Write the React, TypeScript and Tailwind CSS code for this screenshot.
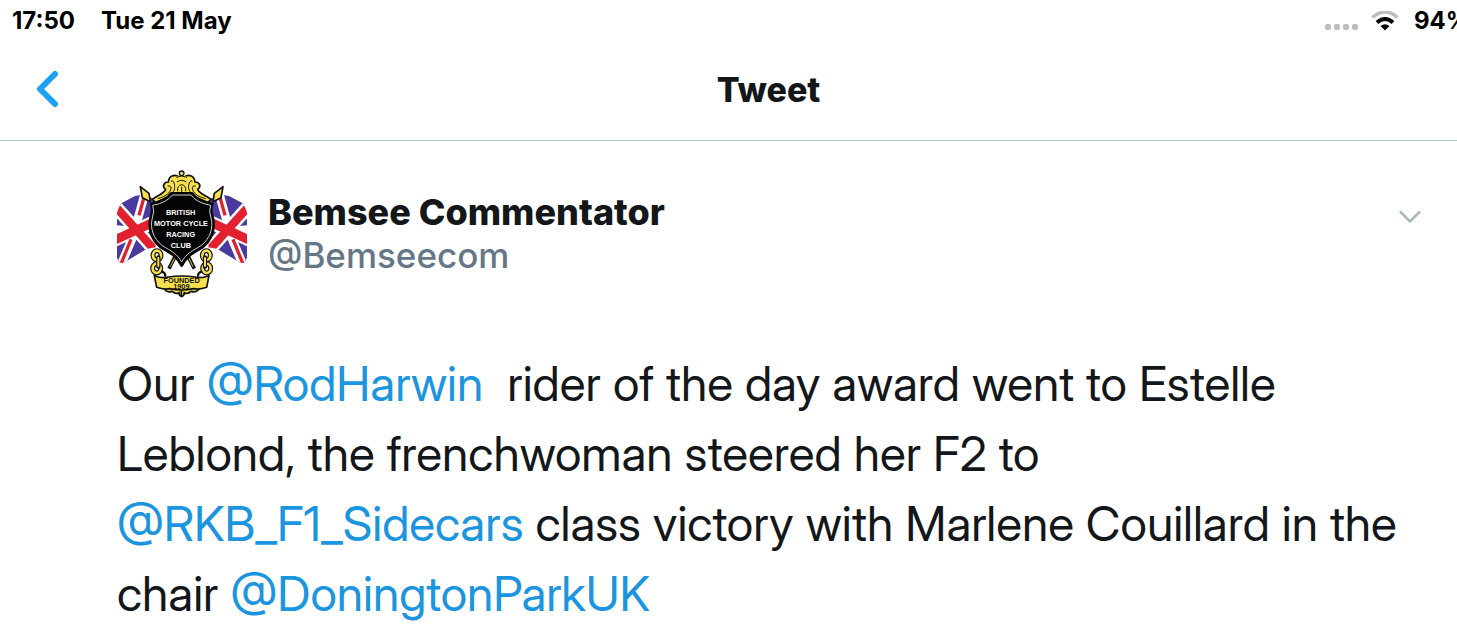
function Avatar() {
  return (
    <svg viewBox="36 30 390 390" className="size-[130px] shrink-0" role="img" aria-label="Bemsee Commentator">
      <defs>
        <clipPath id="round">
          <circle cx="231" cy="225" r="206" />
        </clipPath>
        <clipPath id="edge">
          <rect x="36" y="30" width="390" height="390" />
        </clipPath>
        <clipPath id="flagShape">
          <path d="M90 108 L112 104 L152 118 L152 262 L126 266 L54 310 L10 300 L10 150 Z" />
        </clipPath>
        <g id="flag" clipPath="url(#flagShape)">
          <rect x="0" y="80" width="170" height="240" fill="#4a3aa0" />
          <path d="M122 92 L92 200 M88 220 L44 324" stroke="#fff" strokeWidth="26" />
          <path d="M20 204 L92 212 M92 214 L146 282" stroke="#fff" strokeWidth="20" />
          <path d="M30 138 L156 278" stroke="#fff" strokeWidth="40" />
          <path d="M16 246 L156 182" stroke="#fff" strokeWidth="40" />
          <path d="M121 98 L102 166 M78 238 L48 312" stroke="#e2202f" strokeWidth="10" />
          <path d="M30 138 L156 278" stroke="#e2202f" strokeWidth="25" />
          <path d="M16 246 L156 182" stroke="#e2202f" strokeWidth="27" />
        </g>
        <g id="side">
          <path d="M106 80 L132 100 L136 125 L112 113 Z" fill="#f6e04b" stroke="#111" strokeWidth="5" strokeLinejoin="round" />
          <path d="M142 118 C162 104 176 102 182 88 C170 80 176 66 190 66 C192 46 208 44 218 48 L230 104 C202 100 182 116 152 128 Z" fill="#f6e04b" stroke="#111" strokeWidth="5" />
          <path d="M158 116 C180 110 198 100 198 82 Q196 76 188 78 M190 106 C208 98 214 84 206 66 Q202 60 198 64" fill="none" stroke="#111" strokeWidth="3" />
          <path d="M213 284 L192 326" stroke="#111" strokeWidth="11" />
          <path d="M211 289 L196 320" stroke="#d9be3d" strokeWidth="3" />
          <g fill="none">
            <ellipse cx="156" cy="286" rx="12" ry="14" stroke="#111" strokeWidth="15" />
            <ellipse cx="156" cy="286" rx="12" ry="14" stroke="#f6e04b" strokeWidth="8" />
            <ellipse cx="155" cy="325" rx="12" ry="14" stroke="#111" strokeWidth="15" />
            <ellipse cx="155" cy="325" rx="12" ry="14" stroke="#f6e04b" strokeWidth="8" />
            <path d="M160 292 L160 320" stroke="#111" strokeWidth="13" strokeLinecap="round" />
            <path d="M160 294 L160 318" stroke="#f6e04b" strokeWidth="6" strokeLinecap="round" />
            <path d="M168 334 Q184 338 180 350" stroke="#111" strokeWidth="7" />
          </g>
          <path d="M176 382 Q182 400 202 394 Q212 404 222 398 Q222 408 231 409 L231 376 Z" fill="#f6e04b" stroke="#111" strokeWidth="5" />
        </g>
      </defs>
      <g clipPath="url(#edge)">
        <g clipPath="url(#round)">
          <use href="#flag" />
          <use href="#flag" transform="translate(462 0) scale(-1 1)" />
        </g>
        <use href="#side" />
        <use href="#side" transform="translate(460 0) scale(-1 1)" />
        <path d="M213 102 Q208 70 214 50 L230 42 L246 50 Q252 70 247 102 Z" fill="#f6e04b" />
        <circle cx="230" cy="40" r="7" fill="#f6e04b" stroke="#111" strokeWidth="4" />
        <path d="M214 52 Q230 44 246 52 M216 66 Q230 56 244 66 M218 94 Q216 76 230 74 Q244 76 242 94 M230 80 V98" fill="none" stroke="#111" strokeWidth="3" />
        <path d="M138 132 Q185 122 199 100 H261 Q275 122 322 132 Q314 150 323 172 C331 206 321 240 292 262 C264 278 244 288 230 317 C216 288 196 278 168 262 C139 240 129 206 137 172 Q146 150 138 132 Z" fill="#050505" stroke="#050505" strokeWidth="8" strokeLinejoin="round" />
        <path d="M143 136 Q186 128 202 105 H258 Q274 128 317 136 Q310 152 318 174 C326 204 315 236 288 257 C262 273 243 281 230 306 C217 281 198 273 172 257 C145 236 134 204 142 174 Q150 152 143 136 Z" fill="#050505" stroke="#ccc" strokeWidth="3" />
        <path d="M148 347 Q172 356 190 351 Q230 345 270 351 Q288 356 312 347 L305 382 Q284 390 266 386 Q230 394 194 386 Q176 390 155 382 Z" fill="#f6e04b" stroke="#111" strokeWidth="5" strokeLinejoin="round" />
        <g textAnchor="middle" fontFamily="'Liberation Sans', Arial, sans-serif" fontWeight="700" fill="#fff" fontSize="22">
          <text x="227" y="166">BRITISH</text>
          <text x="228" y="199">MOTOR CYCLE</text>
          <text x="227" y="232">RACING</text>
          <text x="228" y="265">CLUB</text>
        </g>
        <g textAnchor="middle" fontFamily="'Liberation Sans', Arial, sans-serif" fontWeight="700" fill="#111">
          <text x="230" y="368" fontSize="22">FOUNDED</text>
          <text x="229" y="386" fontSize="22">1909</text>
        </g>
      </g>
    </svg>
  )
}

function StatusBar() {
  return (
    <div className="flex h-10 items-center justify-between pt-0.5 pl-3 text-[24px] leading-10 font-bold text-black">
      <div className="flex gap-[26px]">
        <span>17:50</span>
        <span>Tue 21 May</span>
      </div>
      <div className="flex items-center">
        <svg viewBox="0 0 34 8" className="mt-3 mr-3 h-2 w-[34px]" fill="#bdbdbd" aria-hidden="true">
          <rect x="0" y="1" width="6" height="6" rx="2" />
          <rect x="9" y="1" width="6" height="6" rx="2" />
          <rect x="18" y="1" width="6" height="6" rx="2" />
          <rect x="27" y="1" width="6" height="6" rx="2" />
        </svg>
        <svg viewBox="0 0 28 21" className="mr-[15px] h-[21px] w-7" fill="none" aria-hidden="true">
          <path d="M1.500 6.500 Q14 -4.500 26.500 6.500" stroke="#bdbdbd" strokeWidth="3.600" />
          <path d="M6 11.500 Q14 4.500 22 11.500" stroke="#000" strokeWidth="4" />
          <path d="M9.500 15 Q14 11.500 18.500 15 L14 19.500 Z" fill="#000" />
        </svg>
        <span className="w-[43px] overflow-hidden">94%</span>
      </div>
    </div>
  )
}

function Mention({ name }: { name: string }) {
  return (
    <a href={`#${name}`} className="text-[#1b95e0]">
      @{name}
    </a>
  )
}

export default function App() {
  return (
    <div className="overflow-hidden bg-white font-['Inter','Liberation_Sans',sans-serif] text-[#14171a]">
      <StatusBar />
      <header className="flex h-[101px] items-center border-b border-[#b4c5d0] pl-9">
        <button type="button" aria-label="Back" className="shrink-0">
          <svg viewBox="0 0 24 40" className="h-10 w-6" fill="none" stroke="#1da1f2" strokeWidth="6" strokeLinecap="round" strokeLinejoin="round">
            <path d="M19 4 L4 19 L19 34" />
          </svg>
        </button>
        <h1 className="flex-1 pl-5 text-center text-[34px] leading-10 font-extrabold">Tweet</h1>
      </header>
      <main className="pt-[29px] pr-9 pl-[117px]">
        <div className="flex items-start">
          <Avatar />
          <div className="ml-[21px] flex-1 pt-5">
            <div className="text-[36px] leading-[44px] font-extrabold">Bemsee Commentator</div>
            <div className="text-[35px] leading-[42px] font-medium text-[#657786]">@Bemseecom</div>
          </div>
          <button type="button" aria-label="More" className="mt-10">
            <svg viewBox="0 0 22 14" className="h-3.5 w-[22px]" fill="none" stroke="#aab8c2" strokeWidth="2.500">
              <path d="M1 1.500 L11 11.500 L21 1.500" />
            </svg>
          </button>
        </div>
        <p className="mt-[49px] font-['Inter_Display','Inter',sans-serif] text-[48px] leading-[70px] whitespace-pre-wrap">
          Our <Mention name="RodHarwin" />{'  rider of the day award went to Estelle\nLeblond, the frenchwoman steered her F2 to\n'}
          <Mention name="RKB_F1_Sidecars" /> class victory with Marlene Couillard in the{'\n'}
          chair <Mention name="DoningtonParkUK" />
        </p>
      </main>
    </div>
  )
}
